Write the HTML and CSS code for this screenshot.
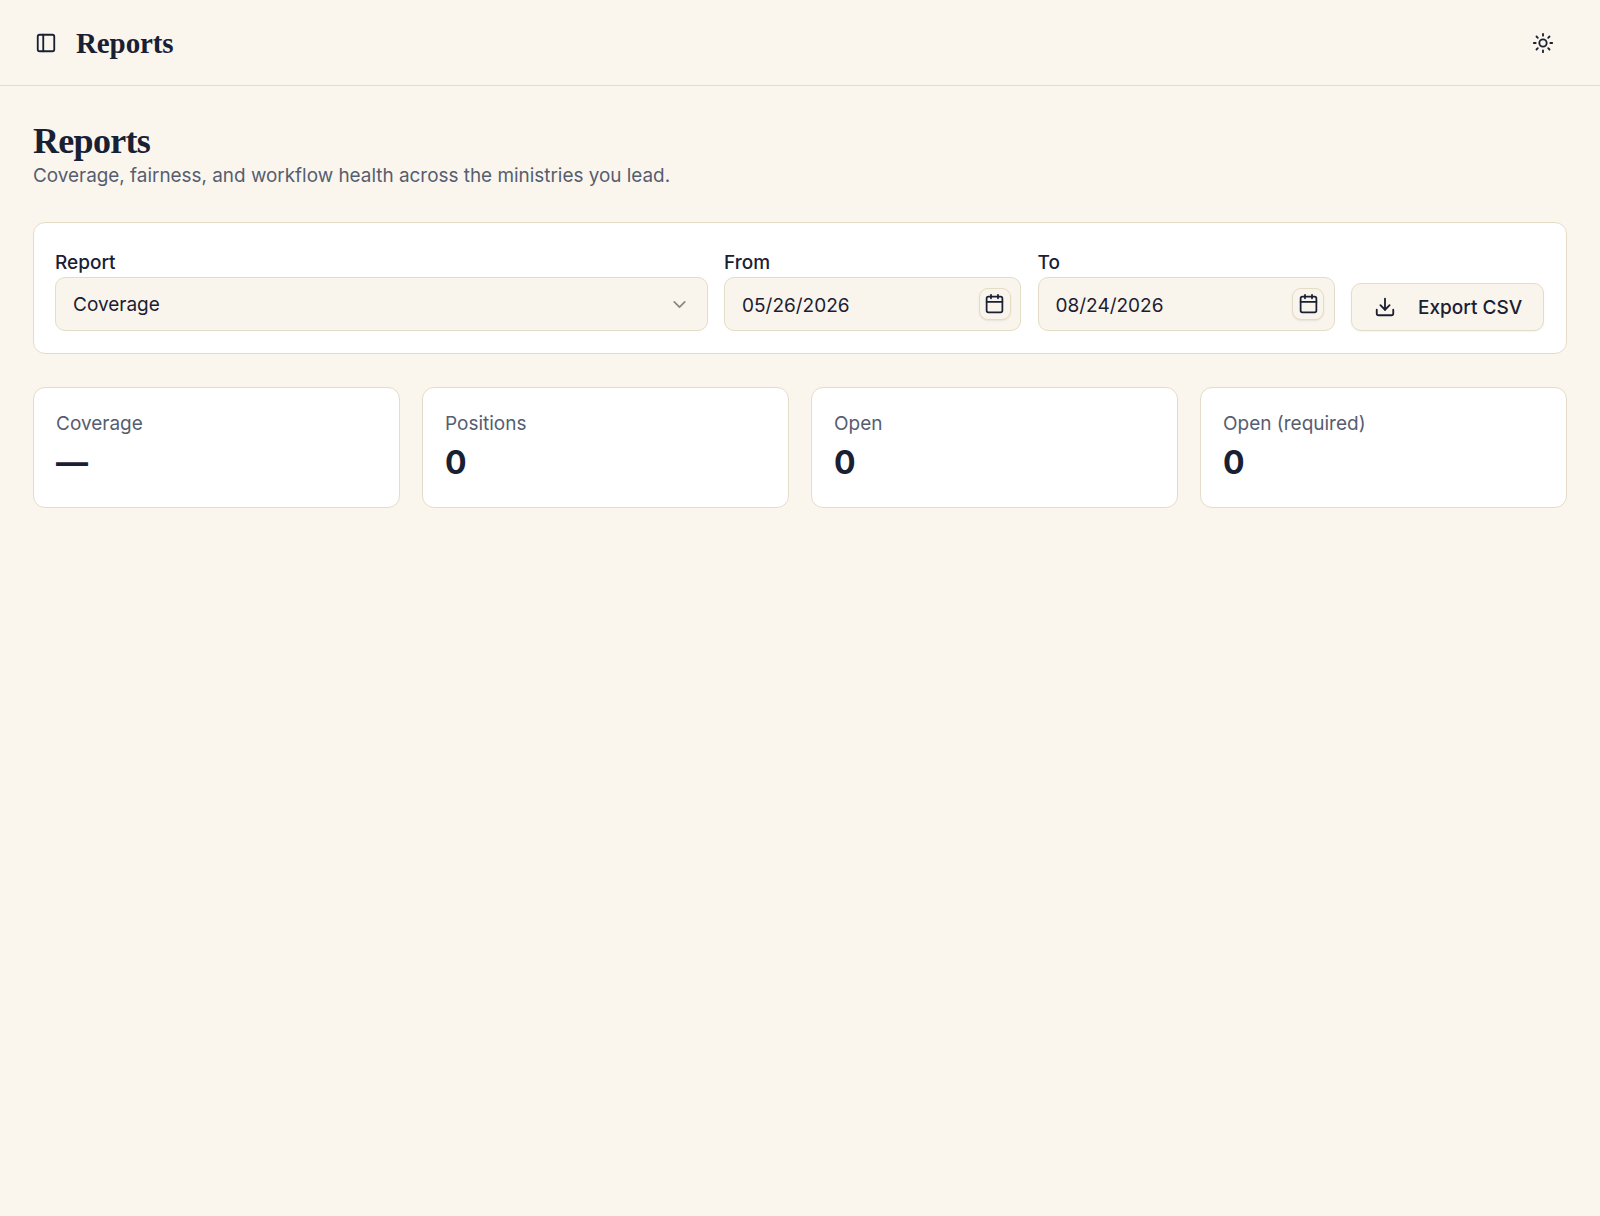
FILE: index.html
```html
<!DOCTYPE html>
<html lang="en">
<head>
  <meta charset="UTF-8">
  <title>Reports</title>
  <meta name="viewport" content="width=device-width, initial-scale=1.0">
  <link rel="stylesheet" href="styles.css">
</head>
<body>
  <header class="topbar">
    <div class="topbar-left">
      <button class="icon-btn" type="button" aria-label="Toggle sidebar">
        <svg class="icon icon-lg" viewBox="0 0 24 24"><rect x="3" y="3" width="18" height="18" rx="2"/><path d="M9 3v18"/></svg>
      </button>
      <span class="topbar-title">Reports</span>
    </div>
    <button class="icon-btn" type="button" aria-label="Toggle theme">
      <svg class="icon icon-lg" viewBox="0 0 24 24"><circle cx="12" cy="12" r="4"/><path d="M12 2v2"/><path d="M12 20v2"/><path d="m4.93 4.93 1.41 1.41"/><path d="m17.66 17.66 1.41 1.41"/><path d="M2 12h2"/><path d="M20 12h2"/><path d="m6.34 17.66-1.41 1.41"/><path d="m19.07 4.93-1.41 1.41"/></svg>
    </button>
  </header>

  <main class="content">
    <h1>Reports</h1>
    <p class="subtitle">Coverage, fairness, and workflow health across the ministries you lead.</p>

    <form class="filters">
      <div class="field field-report">
        <label for="report">Report</label>
        <div class="control">
          <select id="report" name="report">
            <option>Coverage</option>
          </select>
          <svg class="chevron" viewBox="0 0 24 24"><path d="m6 9 6 6 6-6"/></svg>
        </div>
      </div>
      <div class="field field-date">
        <label for="from">From</label>
        <div class="control">
          <input id="from" name="from" type="text" value="05/26/2026">
          <button class="date-btn" type="button" aria-label="Pick start date">
            <svg class="icon" viewBox="0 0 24 24"><path d="M8 2v4"/><path d="M16 2v4"/><rect x="3" y="4" width="18" height="18" rx="2"/><path d="M3 10h18"/></svg>
          </button>
        </div>
      </div>
      <div class="field field-date">
        <label for="to">To</label>
        <div class="control">
          <input id="to" name="to" type="text" value="08/24/2026">
          <button class="date-btn" type="button" aria-label="Pick end date">
            <svg class="icon" viewBox="0 0 24 24"><path d="M8 2v4"/><path d="M16 2v4"/><rect x="3" y="4" width="18" height="18" rx="2"/><path d="M3 10h18"/></svg>
          </button>
        </div>
      </div>
      <button class="export-btn" type="button">
        <svg class="icon icon-lg" viewBox="0 0 24 24"><path d="M12 15V3"/><path d="M21 15v4a2 2 0 0 1-2 2H5a2 2 0 0 1-2-2v-4"/><path d="m7 10 5 5 5-5"/></svg>
        Export CSV
      </button>
    </form>

    <section class="stats">
      <div class="stat">
        <div class="stat-label">Coverage</div>
        <div class="stat-value">—</div>
      </div>
      <div class="stat">
        <div class="stat-label">Positions</div>
        <div class="stat-value">0</div>
      </div>
      <div class="stat">
        <div class="stat-label">Open</div>
        <div class="stat-value">0</div>
      </div>
      <div class="stat">
        <div class="stat-label">Open (required)</div>
        <div class="stat-value">0</div>
      </div>
    </section>
  </main>
</body>
</html>
```

FILE: styles.css
```css
* {
  box-sizing: border-box;
}
body {
  margin: 0;
  min-height: 100vh;
  background: #faf6ee;
  color: #1a2033;
  font-family: Inter, "Noto Sans", sans-serif;
  font-size: 19px;
}
.icon {
  width: 21px;
  height: 21px;
  flex: none;
  fill: none;
  stroke: currentColor;
  stroke-width: 2;
  stroke-linecap: round;
  stroke-linejoin: round;
}
.icon-lg {
  width: 22px;
  height: 22px;
}
/* Top bar */
.topbar {
  height: 86px;
  padding: 0 43px 0 32px;
  display: flex;
  align-items: center;
  justify-content: space-between;
  border-bottom: 1px solid #e5dcc7;
}
.topbar-left {
  display: flex;
  align-items: center;
  gap: 16px;
}
.icon-btn {
  width: 28px;
  height: 28px;
  padding: 0;
  display: flex;
  align-items: center;
  justify-content: center;
  background: none;
  border: none;
  color: inherit;
}
.topbar-title {
  padding-top: 2px;
  font-family: "Liberation Serif", serif;
  font-weight: 700;
  font-size: 29px;
  letter-spacing: -0.1px;
}
/* Page */
.content {
  padding: 33px;
}
h1 {
  margin: 0;
  padding-top: 1px;
  font-family: "Liberation Serif", serif;
  font-weight: 700;
  font-size: 36px;
  letter-spacing: -0.7px;
  line-height: 42px;
}
.subtitle {
  margin: 0;
  color: #565d70;
  font-size: 18.9px;
  line-height: 27px;
}
/* Filter panel */
.filters {
  margin-top: 33px;
  padding: 27px 22px 22px 21px;
  display: flex;
  align-items: flex-end;
  gap: 16.5px;
  background: #fff;
  border: 1px solid #e5dcc7;
  border-radius: 12px;
}
.field-report {
  flex: 1;
}
.field-date {
  width: 297px;
}
label {
  display: block;
  margin-bottom: 1px;
  font-size: 19px;
  font-weight: 500;
  line-height: 26px;
}
.control {
  position: relative;
}
select, input {
  display: block;
  width: 100%;
  height: 54px;
  padding: 0 17px;
  background: #f9f5ec;
  border: 1px solid #e5dcc7;
  border-radius: 10px;
  color: inherit;
  font-family: inherit;
  font-size: 19px;
  appearance: none;
  outline: none;
}
input {
  padding-top: 2px;
}
.chevron {
  position: absolute;
  top: 16.5px;
  right: 18px;
  width: 21px;
  height: 21px;
  fill: none;
  stroke: #8a8880;
  stroke-width: 2;
  stroke-linecap: round;
  stroke-linejoin: round;
}
.date-btn {
  position: absolute;
  top: 10.5px;
  right: 10.5px;
  width: 32px;
  height: 32px;
  padding: 0;
  display: flex;
  align-items: center;
  justify-content: center;
  background: #f9f5ec;
  border: 1px solid #e5dcc7;
  border-radius: 9px;
  box-shadow: 0 1px 2px rgba(0, 0, 0, 0.08);
  color: inherit;
}
.export-btn {
  width: 193px;
  height: 48px;
  flex: none;
  display: flex;
  align-items: center;
  gap: 22px;
  padding: 0 0 0 22px;
  background: #f9f5ec;
  border: 1px solid #e5dcc7;
  border-radius: 10px;
  box-shadow: 0 1px 2px rgba(0, 0, 0, 0.05);
  color: inherit;
  font-family: inherit;
  font-size: 19px;
  font-weight: 500;
  white-space: nowrap;
}
/* Stat cards */
.stats {
  margin-top: 33px;
  display: grid;
  grid-template-columns: repeat(4, 1fr);
  gap: 22px;
}
.stat {
  height: 120.5px;
  padding: 22.5px 22px;
  background: #fff;
  border: 1px solid #e5dcc7;
  border-radius: 12px;
}
.stat-label {
  color: #565d70;
  font-size: 19px;
  line-height: 26px;
}
.stat-value {
  margin-top: 6px;
  font-size: 32px;
  font-weight: 700;
  line-height: 40px;
}
```
